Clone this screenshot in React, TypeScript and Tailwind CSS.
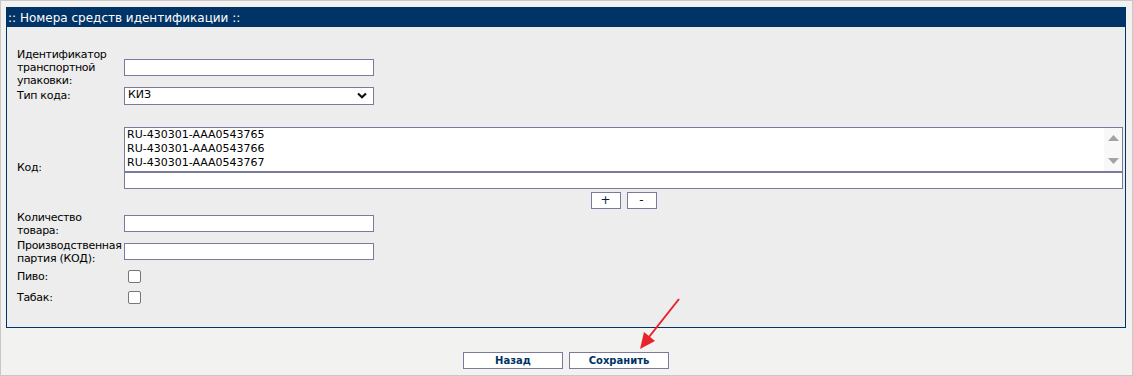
import React from "react";

const font = { fontFamily: '"DejaVu Sans", Verdana, sans-serif' };

function Row({ label, h, children }: { label: React.ReactNode; h: string; children?: React.ReactNode }) {
  return (
    <div className={`flex items-center ${h}`}>
      <div className="w-[107px] shrink-0 text-[11px] leading-[13px] tracking-[-0.3px] text-black">{label}</div>
      <div className="flex-1">{children}</div>
    </div>
  );
}

export default function App() {
  return (
    <div style={font} className="relative w-[1133px] h-[376px] border border-[#c8c8c8] bg-[#f2f2f1] pt-[6px] pl-[5px] pr-[6px]">
      <div className="border border-[#003366] bg-[#ecedec] h-[321px] w-[1120px]">
        <div className="bg-[#003366] h-[19px] flex items-center pl-[1px] text-[12px] text-white leading-none">
          :: Номера средств идентификации ::
        </div>
        <div className="pl-[10px] pr-[2px] pt-[21px]">
          <Row label={<>Идентификатор<br />транспортной<br />упаковки:</>} h="h-[38px]">
            <div className="w-[250px] h-[17px] bg-white border border-[#7a7a9e]" />
          </Row>
          <Row label="Тип кода:" h="h-[19px]">
            <div className="w-[250px] h-[18px] bg-white border border-[#7a7a9e] flex items-center justify-between pl-[3px] pr-[6px] text-[11px]">
              <span>КИЗ</span>
              <svg width="10" height="7" viewBox="0 0 10 7">
                <path d="M1 1.5 L5 5.2 L9 1.5" fill="none" stroke="#111" strokeWidth="2.2" />
              </svg>
            </div>
          </Row>
          <div className="h-[20px]" />
          <Row label="Код:" h="h-[85px]">
            <div className="flex flex-col">
              <div className="h-[45px] bg-white border border-[#7a7a9e] flex">
                <div className="flex-1 pl-[2px] text-[11px] leading-[14px] text-black">
                  <div>RU-430301-AAA0543765</div>
                  <div>RU-430301-AAA0543766</div>
                  <div>RU-430301-AAA0543767</div>
                </div>
                <div className="w-[18px] bg-[#f8f8f8] flex flex-col items-center justify-between py-[7px]">
                  <svg width="11" height="6" viewBox="0 0 11 6"><path d="M5.5 0 L11 6 L0 6 Z" fill="#a3a3a3" /></svg>
                  <svg width="11" height="6" viewBox="0 0 11 6"><path d="M0 0 L11 0 L5.5 6 Z" fill="#a3a3a3" /></svg>
                </div>
              </div>
              <div className="h-[17px] bg-white border border-[#7a7a9e]" />
              <div className="flex justify-center gap-[6px] mt-[3px]">
                <div className="w-[30px] h-[17px] bg-white border border-[#7a7a9e] flex items-center justify-center text-[12px] text-[#0a1a3a] leading-none">+</div>
                <div className="w-[30px] h-[17px] bg-white border border-[#7a7a9e] flex items-center justify-center text-[12px] text-[#0a1a3a] leading-none">-</div>
              </div>
            </div>
          </Row>
          <Row label={<>Количество<br />товара:</>} h="h-[27px]">
            <div className="w-[250px] h-[17px] bg-white border border-[#7a7a9e]" />
          </Row>
          <Row label={<>Производственная<br />партия (КОД):</>} h="h-[29px]">
            <div className="w-[250px] h-[17px] bg-white border border-[#7a7a9e]" />
          </Row>
          <Row label="Пиво:" h="h-[21px]">
            <div className="ml-[4px] w-[13px] h-[13px] bg-white border border-[#767676] rounded-[2px]" />
          </Row>
          <Row label="Табак:" h="h-[21px]">
            <div className="ml-[4px] w-[13px] h-[13px] bg-white border border-[#767676] rounded-[2px]" />
          </Row>
        </div>
      </div>
      <div className="flex justify-center gap-[6px] mt-[24px]">
        <div className="w-[100px] h-[17px] bg-white border border-[#7a7a9e] flex items-center justify-center text-[10px] font-bold text-[#003366] leading-none">Назад</div>
        <div className="w-[100px] h-[17px] bg-white border border-[#7a7a9e] flex items-center justify-center text-[10px] font-bold text-[#003366] leading-none">Сохранить</div>
      </div>
      <svg className="absolute left-0 top-0 pointer-events-none" width="1133" height="376">
        <line x1="678" y1="298" x2="648" y2="336" stroke="#e8232a" strokeWidth="2" />
        <path d="M639 348 L643 331 L654 340 Z" fill="#e8232a" />
      </svg>
    </div>
  );
}
